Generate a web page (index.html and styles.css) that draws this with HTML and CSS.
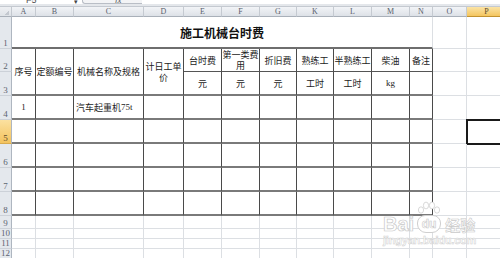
FILE: index.html
```html
<!DOCTYPE html>
<html lang="zh-CN">
<head>
<meta charset="utf-8">
<title>施工机械台时费</title>
<link rel="stylesheet" href="styles.css">
</head>
<body>
<div class="top">
  <div class="namebox"><span>F5</span></div>
  <div class="arrow"><span>▾</span></div>
  <div class="fxbox"><span class="fx">fx</span></div>
</div>
<div class="sheet">
  <div class="corner"></div>
  <div class="ch">A</div><div class="ch">B</div><div class="ch">C</div><div class="ch">D</div><div class="ch">E</div><div class="ch">F</div><div class="ch">G</div><div class="ch">K</div><div class="ch">L</div><div class="ch">M</div><div class="ch">N</div><div class="ch">O</div><div class="ch sel">P</div>

  <div class="rh">1</div>
  <div class="title">施工机械台时费</div>
  <div class="c"></div><div class="c"></div>

  <div class="rh">2</div>
  <div class="t m">序号</div>
  <div class="t m">定额编号</div>
  <div class="t m">机械名称及规格</div>
  <div class="t m">计日工单价</div>
  <div class="t thin">台时费</div>
  <div class="t thin">第一类费用</div>
  <div class="t thin">折旧费</div>
  <div class="t thin">熟练工</div>
  <div class="t thin nw">半熟练工</div>
  <div class="t thin">柴油</div>
  <div class="t thin">备注</div>
  <div class="c"></div><div class="c"></div>

  <div class="rh">3</div>
  <div class="t">元</div><div class="t">元</div><div class="t">元</div><div class="t">工时</div><div class="t">工时</div><div class="t lat">kg</div><div class="t"></div>
  <div class="c"></div><div class="c"></div>

  <div class="rh">4</div>
  <div class="t lat">1</div><div class="t"></div><div class="t left">汽车起重机<span class="lat">75t</span></div><div class="t"></div><div class="t"></div><div class="t"></div><div class="t"></div><div class="t"></div><div class="t"></div><div class="t"></div><div class="t"></div>
  <div class="c"></div><div class="c"></div>

  <div class="rh sel">5</div>
  <div class="t"></div><div class="t"></div><div class="t"></div><div class="t"></div><div class="t"></div><div class="t"></div><div class="t"></div><div class="t"></div><div class="t"></div><div class="t"></div><div class="t"></div>
  <div class="c"></div><div class="c active"></div>

  <div class="rh">6</div>
  <div class="t"></div><div class="t"></div><div class="t"></div><div class="t"></div><div class="t"></div><div class="t"></div><div class="t"></div><div class="t"></div><div class="t"></div><div class="t"></div><div class="t"></div>
  <div class="c"></div><div class="c"></div>

  <div class="rh">7</div>
  <div class="t"></div><div class="t"></div><div class="t"></div><div class="t"></div><div class="t"></div><div class="t"></div><div class="t"></div><div class="t"></div><div class="t"></div><div class="t"></div><div class="t"></div>
  <div class="c"></div><div class="c"></div>

  <div class="rh">8</div>
  <div class="t"></div><div class="t"></div><div class="t"></div><div class="t"></div><div class="t"></div><div class="t"></div><div class="t"></div><div class="t"></div><div class="t"></div><div class="t"></div><div class="t"></div>
  <div class="c"></div><div class="c"></div>

  <div class="rh">9</div>
  <div class="c"></div><div class="c"></div><div class="c"></div><div class="c"></div><div class="c"></div><div class="c"></div><div class="c"></div><div class="c"></div><div class="c"></div><div class="c"></div><div class="c"></div><div class="c"></div><div class="c"></div>
  <div class="rh">10</div>
  <div class="c"></div><div class="c"></div><div class="c"></div><div class="c"></div><div class="c"></div><div class="c"></div><div class="c"></div><div class="c"></div><div class="c"></div><div class="c"></div><div class="c"></div><div class="c"></div><div class="c"></div>
  <div class="rh">11</div>
  <div class="c"></div><div class="c"></div><div class="c"></div><div class="c"></div><div class="c"></div><div class="c"></div><div class="c"></div><div class="c"></div><div class="c"></div><div class="c"></div><div class="c"></div><div class="c"></div><div class="c"></div>
  <div class="rh">12</div>
  <div class="c"></div><div class="c"></div><div class="c"></div><div class="c"></div><div class="c"></div><div class="c"></div><div class="c"></div><div class="c"></div><div class="c"></div><div class="c"></div><div class="c"></div><div class="c"></div><div class="c"></div>
</div>

<div class="wm">
  <div class="wm-line">
    <span class="wm-bai">Bai</span>
    <span class="wm-du">
      <svg class="paw" width="24" height="14" viewBox="0 0 24 14">
        <ellipse cx="4" cy="9" rx="2.6" ry="3.2" />
        <ellipse cx="9" cy="4.5" rx="2.6" ry="3.4" />
        <ellipse cx="15" cy="4.5" rx="2.6" ry="3.4" />
        <ellipse cx="20" cy="9" rx="2.6" ry="3.2" />
      </svg>
      <span class="wm-dutext">du</span>
    </span>
    <span class="wm-jy">经验</span>
  </div>
  <div class="wm-url">jingyan.baidu.com</div>
</div>
</body>
</html>
```

FILE: styles.css
```css
html, body {
  margin: 0;
  padding: 0;
}
body {
  width: 500px;
  height: 258px;
  overflow: hidden;
  position: relative;
  background: #ffffff;
  font-family: "Noto Sans CJK SC", "Noto Sans", sans-serif;
}

/* formula bar remnant */
.top {
  height: 7px;
  display: flex;
  align-items: flex-start;
  background: linear-gradient(#ffffff 0 4px, #e4e7eb 4px 6px, #c4c9d0 6px 7px);
  overflow: hidden;
}
.namebox {
  width: 74px;
  height: 4px;
  display: flex;
  align-items: flex-end;
  padding-left: 26px;
  box-sizing: border-box;
  overflow: hidden;
}
.namebox span {
  font-family: "Liberation Sans", sans-serif;
  font-size: 9px;
  line-height: 7px;
  color: #555;
}
.arrow {
  width: 8px;
  height: 4px;
  overflow: hidden;
  display: flex;
  align-items: flex-end;
}
.arrow span {
  font-size: 7px;
  line-height: 5px;
  color: #444;
}
.fxbox {
  width: 60px;
  height: 4px;
  border-left: 1px solid #b9bec6;
  border-bottom: 1px solid #b9bec6;
  border-bottom-left-radius: 3px;
  background: #f3f4f6;
  display: flex;
  align-items: flex-end;
  padding-left: 32px;
  box-sizing: border-box;
  overflow: hidden;
}
.fx {
  font-family: "Liberation Serif", serif;
  font-style: italic;
  font-size: 9px;
  line-height: 6px;
  color: #555;
}

/* sheet grid */
.sheet {
  display: grid;
  grid-template-columns: 12px 24px 38px 70px 40px 38px 38px 37px 37px 38px 38px 23px 34px 40px;
  grid-template-rows: 10px 32px 23px 24px 24px 24px 24px 24px 24px 13px 10px 10px 10px;
}
.sheet > div {
  box-sizing: border-box;
  min-width: 0;
}

.corner {
  background:
    linear-gradient(135deg, transparent 0 55%, #c3c8cf 55%) right 2px bottom 1px / 5px 5px no-repeat,
    linear-gradient(#eef0f3, #dfe3e8);
  border-right: 1px solid #c3c8cf;
  border-bottom: 1px solid #a9b0b9;
}
.ch {
  background: linear-gradient(#f2f4f7, #dde1e7);
  border-right: 1px solid #c5cad1;
  border-bottom: 1px solid #a9b0b9;
  font-family: "Liberation Serif", serif;
  font-size: 8px;
  line-height: 9px;
  color: #5a616c;
  text-align: center;
}
.ch.sel {
  background: linear-gradient(#fbe4a6, #f4c55f);
  border-right-color: #d7ac52;
  border-bottom-color: #c2922f;
  color: #5a4a2a;
}
.rh {
  background: #e4e8ed;
  border-right: 1px solid #aeb6c0;
  border-bottom: 1px solid #ccd1d8;
  font-family: "Liberation Serif", serif;
  font-size: 9px;
  line-height: 9px;
  color: #5d6470;
  display: flex;
  align-items: flex-end;
  justify-content: center;
  overflow: hidden;
}
.rh.sel {
  background: linear-gradient(#fbe1a0, #f3c35e);
  border-bottom-color: #d9ab4e;
  color: #5a4a2a;
}

.c {
  border-right: 1px solid #dcdfe3;
  border-bottom: 1px solid #dcdfe3;
}
.c.active {
  outline: 2px solid #1a1a1a;
  outline-offset: -1px;
}

.title {
  grid-column: span 11;
  border-right: 1px solid #dcdfe3;
  border-bottom: 2px solid #6e6e6e;
  display: flex;
  align-items: center;
  justify-content: center;
  font-weight: 700;
  font-size: 12px;
  color: #111;
  padding-top: 1px;
}

.t {
  border-right: 1px solid #4a4a4a;
  border-bottom: 2px solid #7a7a7a;
  display: flex;
  align-items: center;
  justify-content: center;
  text-align: center;
  font-size: 9px;
  line-height: 11px;
  color: #222;
  overflow: hidden;
}
.t.m {
  grid-row: span 2;
}
.t.thin {
  border-bottom: 1px solid #555;
}
.t.nw {
  white-space: nowrap;
}
.t.left {
  justify-content: flex-start;
  padding-left: 2px;
  white-space: nowrap;
}
.lat {
  font-family: "Liberation Serif", serif;
  font-size: 9px;
}

/* watermark */
.wm {
  position: absolute;
  left: 383px;
  top: 200px;
  display: flex;
  flex-direction: column;
  align-items: flex-start;
  color: #ffffff;
}
.wm-line {
  display: flex;
  align-items: flex-end;
  height: 33px;
}
.wm-bai {
  font-family: "Liberation Sans", sans-serif;
  font-weight: 700;
  font-size: 20px;
  line-height: 18px;
  -webkit-text-stroke: 0.7px #c9c9c9;
}
.wm-du {
  position: relative;
  margin-left: 3px;
  width: 22px;
  height: 16px;
  border: 1px solid #cfcfcf;
  border-radius: 8px 8px 9px 9px;
  background: #fff;
  display: flex;
  align-items: center;
  justify-content: center;
}
.paw {
  position: absolute;
  left: -1px;
  top: -15px;
  fill: #ffffff;
  stroke: #cfcfcf;
  stroke-width: 0.8;
}
.wm-dutext {
  font-family: "Liberation Sans", sans-serif;
  font-weight: 700;
  font-size: 12px;
  line-height: 12px;
  color: #fff;
  -webkit-text-stroke: 0.6px #c9c9c9;
}
.wm-jy {
  margin-left: 4px;
  font-weight: 700;
  font-size: 15px;
  line-height: 17px;
  -webkit-text-stroke: 0.6px #c9c9c9;
}
.wm-url {
  margin-top: 2px;
  font-family: "Liberation Sans", sans-serif;
  font-weight: 700;
  font-size: 11px;
  line-height: 11px;
  -webkit-text-stroke: 0.5px #cfcfcf;
  letter-spacing: -0.2px;
}
```
